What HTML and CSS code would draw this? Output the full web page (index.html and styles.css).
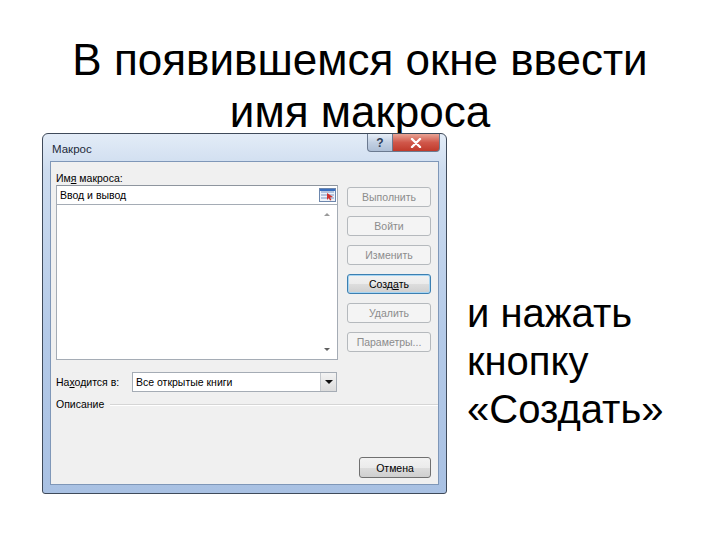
FILE: index.html
```html
<!DOCTYPE html>
<html lang="ru">
<head>
  <meta charset="UTF-8" />
  <title>Макрос</title>
  <link rel="stylesheet" href="styles.css">
</head>
<body>
  <h1 class="slide-title">В появившемся окне ввести<br>имя макроса</h1>

  <div class="slide-body">
    <div class="dialog">
      <div class="titlebar">
        <span class="caption">Макрос</span>
        <div class="caption-buttons">
          <span class="cap-btn help">?</span>
          <span class="cap-btn close">
            <svg width="12" height="10" viewBox="0 0 12 10">
              <path d="M2 1 L10 9 M10 1 L2 9" stroke="#fff" stroke-width="2.4" stroke-linecap="round"/>
            </svg>
          </span>
        </div>
      </div>

      <div class="client">
        <div class="top">
          <div class="left">
            <div class="label">Им<u>я</u> макроса:</div>
            <div class="name-field">
              <span>Ввод и вывод</span>
              <svg class="range-icon" width="17" height="14" viewBox="0 0 17 14">
                <rect x="0.5" y="0.5" width="16" height="13" fill="#eef3fa" stroke="#6d87ad"/>
                <path d="M2 4 H15 M2 7 H15 M2 10 H15" stroke="#7a95bf" stroke-width="1"/>
                <rect x="1" y="1" width="15" height="2" fill="#3a6fc0"/>
                <path d="M8 5 L14 9 L11 9.5 L12.5 12 L11 12.5 L9.8 10 L8 12 Z" fill="#d0312d"/>
              </svg>
            </div>
            <div class="macro-list">
              <span class="arrow up"></span>
              <span class="arrow down"></span>
            </div>
          </div>

          <div class="buttons">
            <div class="btn disabled">Выполнить</div>
            <div class="btn disabled">Войти</div>
            <div class="btn disabled">Изменить</div>
            <div class="btn default">Созд<u>а</u>ть</div>
            <div class="btn disabled">Удалить</div>
            <div class="btn disabled">Параметры...</div>
          </div>
        </div>

        <div class="place-row">
          <span class="place-label">На<u>х</u>одится в:</span>
          <div class="combo">
            <span>Все открытые книги</span>
            <span class="combo-drop"></span>
          </div>
        </div>

        <div class="desc-row">
          <span>Описание</span>
          <span class="groove"></span>
        </div>

        <div class="footer">
          <div class="btn">Отмена</div>
        </div>
      </div>
    </div>

    <p class="side-text">и нажать<br>кнопку<br>«Создать»</p>
  </div>
</body>
</html>
```

FILE: styles.css
```css
body {
  margin: 0;
  width: 720px;
  height: 540px;
  background: #fff;
  font-family: 'Liberation Sans', Arial, sans-serif;
  color: #000;
  overflow: hidden;
}

.slide-title {
  margin: 0;
  padding-top: 34px;
  font-size: 44px;
  font-weight: normal;
  line-height: 52px;
  text-align: center;
}

.slide-body {
  display: flex;
  align-items: flex-start;
  margin-top: -5px;
}

/* dialog window */
.dialog {
  margin-left: 42px;
  width: 389px;
  border: 1px solid #3f4a5a;
  border-radius: 6px 6px 3px 3px;
  padding: 0 7px 8px 7px;
  background: linear-gradient(180deg, #e3ecf7 0%, #cddcef 10%, #b4cae8 55%, #a9c1e3 100%);
  font-size: 10.5px;
}

.titlebar {
  height: 27px;
  display: flex;
  justify-content: space-between;
  align-items: flex-start;
}

.caption {
  padding-top: 9px;
  padding-left: 2px;
  font-size: 11.5px;
  color: #1e2a3a;
}

.caption-buttons {
  display: flex;
  margin-right: -1px;
}

.cap-btn {
  height: 17px;
  display: flex;
  align-items: center;
  justify-content: center;
  border: 1px solid #6b7a90;
  border-top: none;
}

.help {
  width: 24px;
  border-radius: 0 0 0 4px;
  background: linear-gradient(180deg, #e7eef7, #c2d0e3 50%, #aebfd6);
  color: #2c3d59;
  font-weight: bold;
  font-size: 12px;
}

.close {
  width: 46px;
  border-left: none;
  border-radius: 0 0 4px 0;
  background: linear-gradient(180deg, #e8a394, #d0574a 50%, #c03a2b);
}

.client {
  border: 1px solid #7f97b8;
  background: #f0f0f0;
  padding: 10px 7px 6px 5px;
}

.top {
  display: flex;
  gap: 9px;
}

.left {
  width: 282px;
}

.label {
  height: 13px;
  line-height: 13px;
}

.name-field {
  height: 20px;
  box-sizing: border-box;
  border: 1px solid #a5acb5;
  border-top-color: #8e959e;
  background: #fff;
  display: flex;
  align-items: center;
  justify-content: space-between;
  padding: 0 1px 0 3px;
}

.range-icon {
  display: block;
}

.macro-list {
  position: relative;
  height: 155px;
  box-sizing: border-box;
  border: 1px solid #a5acb5;
  border-top: none;
  background: #fff;
}

.arrow {
  position: absolute;
  right: 7px;
  width: 0;
  height: 0;
  border-left: 3px solid transparent;
  border-right: 3px solid transparent;
}

.arrow.up {
  top: 8px;
  border-bottom: 3px solid #9a9a9a;
}

.arrow.down {
  bottom: 8px;
  border-top: 3px solid #606060;
}

.buttons {
  width: 84px;
  padding-top: 15px;
  display: flex;
  flex-direction: column;
  gap: 9px;
}

.btn {
  height: 20px;
  box-sizing: border-box;
  border: 1px solid #707070;
  border-radius: 3px;
  background: linear-gradient(180deg, #f2f2f2 0%, #ebebeb 50%, #dddddd 51%, #cfcfcf 100%);
  display: flex;
  align-items: center;
  justify-content: center;
}

.btn.disabled {
  border-color: #b5b9bd;
  background: #f4f4f4;
  color: #8c8c8c;
}

.btn.default {
  border-color: #3c7fb1;
  box-shadow: inset 0 0 0 1px #a6d5f3;
  background: linear-gradient(180deg, #f2f2f2 0%, #ebebeb 50%, #dddddd 51%, #cfcfcf 100%);
}

.place-row {
  margin-top: 12px;
  display: flex;
  align-items: center;
}

.place-label {
  width: 76px;
}

.combo {
  width: 205px;
  height: 20px;
  box-sizing: border-box;
  border: 1px solid #a5acb5;
  background: #fff;
  display: flex;
  align-items: center;
  justify-content: space-between;
  padding-left: 3px;
}

.combo-drop {
  width: 15px;
  height: 18px;
  border-left: 1px solid #c5c9ce;
  background: linear-gradient(180deg, #f3f3f3, #dcdcdc);
  position: relative;
}

.combo-drop::after {
  content: '';
  position: absolute;
  left: 4px;
  top: 7px;
  border-left: 4px solid transparent;
  border-right: 4px solid transparent;
  border-top: 4px solid #111;
}

.desc-row {
  margin-top: 6px;
  height: 13px;
  line-height: 13px;
  display: flex;
  align-items: center;
  gap: 6px;
}

.groove {
  flex: 1;
  height: 0;
  border-top: 1px solid #d5d5d5;
  border-bottom: 1px solid #fff;
  margin-right: -7px;
}

.footer {
  margin-top: 46px;
  display: flex;
  justify-content: flex-end;
}

.footer .btn {
  width: 72px;
  height: 21px;
}

/* right column text */
.side-text {
  margin: 156px 0 0 20px;
  font-size: 40px;
  line-height: 48px;
}
```
